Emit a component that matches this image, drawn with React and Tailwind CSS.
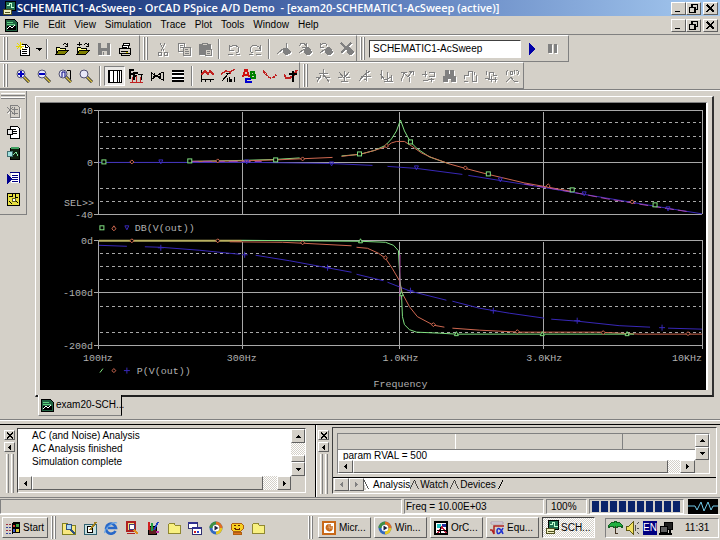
import React from "react";

const RAISED = "border border-t-white border-l-white border-b-[#606060] border-r-[#606060]";
const SUNKEN = "border border-t-[#808080] border-l-[#808080] border-b-white border-r-white";

function Glyph({ children, size = "h-[14px] w-[14px]", off = false }) {
  return (
    <svg
      viewBox="0 0 14 14"
      fill="none"
      stroke={off ? "#808080" : "#000"}
      shapeRendering="crispEdges"
      aria-hidden="true"
      className={`${size} shrink-0 ${off ? "[filter:drop-shadow(1px_1px_0_#fff)]" : ""}`}
    >
      {children}
    </svg>
  );
}

/* ---------- toolbar glyphs ---------- */
const lens = (inner) => (
  <g shapeRendering="auto">
    <path d="M8 8l5 5" stroke="#202020" strokeWidth="3" />
    <path d="M8 8l5 5" stroke="#d8c040" strokeWidth="1.500" />
    <circle cx="5" cy="5" r="4" fill="#e8e8f8" stroke="#505070" />
    {inner}
  </g>
);
const folderOpen = (
  <>
    <path d="M1 12V5h3l1 1h5v2" fill="#ffff90" />
    <path d="M1 12l3-4h10l-4 4z" fill="#808000" />
    <path d="M8 3c1-2 3-2 4 0M12 1v3h-2" />
  </>
);
const G = {
  fresh: (
    <>
      <path d="M4 2h6l3 3v8H4z" fill="#fff" />
      <path d="M6 7h5M6 9h5M6 11h5M9 2v3h3" />
      <path d="M4 0v8M0 4h8M1 1l6 6M7 1L1 7" stroke="#e8d800" />
    </>
  ),
  open: folderOpen,
  append: (
    <>
      {folderOpen}
      <path d="M1 2h5M3 0v4" />
    </>
  ),
  save: (
    <>
      <path d="M1 1h12v12H1z" fill="#808080" stroke="none" />
      <path d="M4 1h6v5H4zM5 9h5v4H5z" fill="#d4d0c8" stroke="none" />
      <path d="M6 10v3" />
    </>
  ),
  print: (
    <>
      <path d="M4 6l2-5h6l-2 5z" fill="#fff" />
      <path d="M1 6h11v5H1zM3 11v2h9l1-5-1-2" fill="#d4d0c8" />
      <path d="M6 3h4M5 5h4M3 9h7" />
      <path d="M8 10h2" stroke="#d0c000" />
    </>
  ),
  cut: <path d="M4 1l4 8M9 1L5 9M2 10h3v3H2zM8 10h3v3H8z" />,
  copy: (
    <>
      <path d="M1 1h6v8H1zM3 3h3M3 5h3" />
      <path d="M6 5h7v8H6z" fill="#d4d0c8" />
      <path d="M8 7h3M8 9h4M8 11h4" />
    </>
  ),
  paste: (
    <>
      <path d="M1 2h11v10H1z" fill="#808080" />
      <path d="M4 1h5v2H4z" fill="#d4d0c8" />
      <path d="M7 7h6v6H7z" fill="#d4d0c8" />
      <path d="M9 9h3M9 11h3" />
    </>
  ),
  undo: <path d="M2 3v5h5M2 7c1-4 9-5 10 0 0 2-1 4-3 4M1 12h5M9 12h4" />,
  redo: <path d="M12 3v5H7M12 7C11 3 3 2 2 7c0 2 1 4 3 4M1 12h4M8 12h5" />,
  pin: (
    <>
      <path d="M0 12L7 6" />
      <path d="M9 1v5l4 3v2l-4 2-3-3V8l3-2z" fill="#808080" />
    </>
  ),
  pinNext: (
    <>
      <path d="M1 4c2-4 6-3 7 0M8 1v4H4M1 11l5-4" />
      <path d="M10 5l3 4v2l-3 2-4-3V8z" fill="#808080" />
    </>
  ),
  pinPrev: (
    <>
      <path d="M8 4C7 0 2 1 1 4M1 1v4h4M1 11l5-4" />
      <path d="M10 5l3 4v2l-3 2-4-3V8z" fill="#808080" />
    </>
  ),
  pinOff: (
    <>
      <path d="M1 1l11 11M11 1L1 11" strokeWidth="2" />
      <path d="M9 5l4 4v2l-3 2-3-3V7z" fill="#808080" />
    </>
  ),
  run: <path d="M4 1v12l7-6z" fill="#0000a8" stroke="none" />,
  pause: <path d="M2 2h4v9H2zM8 2h3v9H8z" fill="#808080" stroke="none" />,
  zoomIn: lens(<path d="M5 2v6M2 5h6" stroke="#0000c0" strokeWidth="2" />),
  zoomOut: lens(<path d="M2 5h6" stroke="#0000c0" strokeWidth="2" />),
  zoomArea: lens(
    <>
      <path d="M4 3v5M4 3h3v5" stroke="#000080" />
      <path d="M9 1.500h3.500v9" stroke="#000" />
    </>
  ),
  zoomFit: lens(null),
  logX: (
    <>
      <path d="M0 1h14v12H0z" fill="#fff" />
      <path d="M1 1v12M5 1v12M9 1v12M11 1v12M13 1v12" />
    </>
  ),
  fft: (
    <>
      <path d="M1 10V1h4M1 5h3M5 11V4h4M5 7h3" strokeWidth="2" />
      <path d="M9 5h5M12 5v6" strokeWidth="1" />
      <path d="M1 13h13M3 13V8M7 13V7M11 13V8" stroke="#c02020" />
    </>
  ),
  perf: <path d="M1 3v9M13 3v9M1 4l5 3 7 4M1 11l5-4 7-4M4 4v5M10 4v5M3 7h8" />,
  logY: (
    <>
      <path d="M1 1h12v11H1z" fill="#fff" stroke="none" />
      <path d="M1 2h12M1 5h12M1 9h12M1 12h12" strokeWidth="1.5" />
    </>
  ),
  trace: (
    <>
      <path d="M1 1v12M1 10h13M5 10v3M10 10v3" />
      <path d="M1 6l4-4 3 3 2-3 4 4" stroke="#c02020" strokeWidth="1.5" />
    </>
  ),
  goal: (
    <>
      <path d="M0 5l5-3 4 1 5-3M9 2v3" stroke="#c02020" strokeWidth="1.5" />
      <path d="M1 12l7-8M5 4h4M6 9v4M8 8v5M9 10l2 3M11 10l-2 3M13 8v5" />
    </>
  ),
  label: (
    <>
      <path d="M1 8l2-7h2l2 7M2 6h4" stroke="#d01010" strokeWidth="2" />
      <path d="M9 3h3v3H9zM9 6h4v3H9z" stroke="#008000" strokeWidth="1.5" />
      <path d="M9 10H4v3h6" stroke="#0000d0" strokeWidth="2" />
    </>
  ),
  points: <path d="M0 2l3 3 2 3 3 1 3-1 2-2" stroke="#c02020" strokeWidth="1.5" strokeDasharray="3 1" />,
  cursor: (
    <>
      <path d="M0 5l2 4h4l3-2 4-6" stroke="#c02020" strokeWidth="2" />
      <path d="M5 5h8M9 2v11" strokeWidth="1.5" />
    </>
  ),
  c1: <path d="M7 0v8M3 4h9M1 13l4-7M13 13L8 6M0 8h5M10 8h4" />,
  c2: <path d="M7 2v11M2 3l5 6 5-6M1 8h4M9 8h4M4 12h7" />,
  c3: <path d="M1 12l5-6 6-4M8 1v11M3 7h10M6 10h3" />,
  c4: <path d="M2 1v9M1 5l5 6 6-3M8 3v9M12 6v6M5 12h9" />,
  c5: <path d="M1 12l3-8 4 4 4-6M1 3h6M9 2h4v4M9 8v5" />,
  c6: <path d="M1 5h5M4 2v6M8 3h5v4H8M2 11h5M10 9v4M7 10h6" />,
  c7: (
    <>
      <path d="M3 1h3v5H3zM8 1h3v5H8z" fill="#808080" />
      <path d="M1 7h4v5H1zM9 7h4v5H9zM6 5h2v4H6z" fill="#808080" />
    </>
  ),
  c8: <path d="M1 10V6h4V2h4v10h4V6M1 12h4M11 3v3" />,
  c9: <path d="M1 9h4V3h4v3h4M7 7v6M4 10h9M11 8v5M2 2v4" />,
  c10: <path d="M3 1L1 3v2l1 1M5 2h2v3H5zM9 1v4M11 1l2 1v3l-1 1M1 13l5-5 3 4h4" />,
};

/* ---------- application and desktop pictures ---------- */
const A = {
  pspice: (
    <>
      <path d="M3 0h10v9H3z" fill="#207050" />
      <path d="M5 4h2v-2h2v4h3" stroke="#c0ffd0" />
      <path d="M1 8h8v5H1z" fill="#f0f0c0" stroke="#505020" />
      <path d="M3 11h5" stroke="#505020" />
    </>
  ),
  sheet: (
    <>
      <path d="M1 1h9l3 3v9H1z" fill="#206040" />
      <path d="M3 8h9v4H3z" fill="#000" stroke="none" />
      <path d="M3 4h6M3 6h8" stroke="#60d080" />
      <path d="M3 11l3-3 2 2 3-3" stroke="#fff" />
    </>
  ),
  out: (
    <>
      <path d="M4 1h7l2 2v10H4z" fill="#fff" />
      <path d="M7 4h3M7 6h4M7 8h4" />
      <circle cx="4" cy="7" r="3" fill="#e8e8e8" />
    </>
  ),
  outOff: (
    <>
      <path d="M4 1h7l2 2v10H4z" fill="#d4d0c8" />
      <path d="M1 3l6 6M7 3L1 9M6 5h6M8 3v8M6 9h6" />
    </>
  ),
  cir: (
    <>
      <path d="M4 2h9v11H4z" fill="#102010" />
      <path d="M5 2h8" stroke="#40a060" strokeWidth="2" />
      <path d="M7 9l3-3 2 4" stroke="#80e0a0" />
      <circle cx="4" cy="8" r="3" fill="#a0e0e0" stroke="#407070" />
    </>
  ),
  queue: (
    <>
      <path d="M5 1h8v11H5z" fill="#fff" stroke="none" />
      <path d="M4 1h9v11M6 4h6M6 6h6M6 8h6M6 10h6" stroke="#000080" />
      <path d="M1 3v10l5-5z" fill="#000090" stroke="none" />
    </>
  ),
  model: (
    <>
      <path d="M1 1h12v12H1z" fill="#e8e040" />
      <path d="M3 4h3V1M9 2v3h3M3 9l3 3M10 9l2 2" />
      <circle cx="8" cy="8" r="2" fill="#fff" stroke="#606020" />
    </>
  ),
  flag: (
    <>
      <path d="M6 2c3-2 5 0 8-1v11c-3 1-5-1-8 1z" fill="#000" stroke="none" />
      <path d="M7 4h2v2H7z" fill="#e04030" stroke="none" />
      <path d="M10 3h3v3h-3z" fill="#40a040" stroke="none" />
      <path d="M7 8h2v3H7z" fill="#4060d0" stroke="none" />
      <path d="M10 8h3v3h-3z" fill="#e8d040" stroke="none" />
      <path d="M0 3h5M0 9h5" stroke="#a03040" strokeDasharray="2 1" />
      <path d="M0 6h5M0 12h5" stroke="#3040a0" strokeDasharray="2 1" />
    </>
  ),
  find: (
    <>
      <path d="M0 2h5l1 2h7v9H0z" fill="#f8e880" stroke="#808020" />
      <circle cx="7" cy="6" r="3" fill="#a8d8f8" stroke="#305080" />
      <path d="M9 9l4 4" stroke="#305080" strokeWidth="2" />
    </>
  ),
  desk: (
    <>
      <path d="M1 3h12v10H1z" fill="#c8e0e0" stroke="#306070" />
      <path d="M4 5h5v6H4z" fill="#fff" />
      <path d="M7 9l6-8" strokeWidth="2" stroke="#a08020" />
    </>
  ),
  ie: (
    <g shapeRendering="auto">
      <path d="M11.5 10A5 5 0 1 1 12 7H4" stroke="#2868c8" strokeWidth="2.6" />
      <path d="M1 12C0 9 8 0 13 2" stroke="#60a0e8" strokeWidth="1.2" />
    </g>
  ),
  pdf: (
    <>
      <path d="M2 1h8v9H2z" fill="#f0e080" stroke="#b02020" strokeWidth="2" />
      <circle cx="7" cy="6" r="3" fill="#fff" stroke="#404080" />
      <path d="M9 9l4 4" stroke="#e09020" strokeWidth="2" />
      <path d="M2 12h8" stroke="#b02020" />
    </>
  ),
  paint: (
    <>
      <path d="M2 5h8v8H2z" fill="#602020" />
      <path d="M3 1v8" stroke="#d02020" strokeWidth="2" />
      <path d="M6 2v8" stroke="#20a040" strokeWidth="2" />
      <path d="M12 1L8 9" stroke="#2040c0" strokeWidth="2" />
      <path d="M10 11h3" stroke="#c030a0" strokeWidth="2" />
    </>
  ),
  folder: (
    <path d="M1 12V4l2-2h4l1 2h5v8z" fill="#f8f080" stroke="#908830" />
  ),
  windows: (
    <>
      <path d="M0 1h9v6H0z" fill="#fff" stroke="#303070" />
      <path d="M0 2h9" stroke="#303090" strokeWidth="2" />
      <path d="M4 6h9v7H4z" fill="#fff" stroke="#303070" />
      <path d="M4 7h9" stroke="#303090" strokeWidth="2" />
      <path d="M6 11h2" stroke="#d02020" strokeWidth="2" />
      <path d="M9 11h2" stroke="#2040d0" strokeWidth="2" />
    </>
  ),
  media: (
    <g shapeRendering="auto">
      <circle cx="7" cy="7" r="5" stroke="#3068c0" strokeWidth="3" fill="#fff" />
      <path d="M7 2a5 5 0 0 1 5 5" stroke="#e07020" strokeWidth="3" />
      <path d="M12 7a5 5 0 0 1-5 5" stroke="#e8c820" strokeWidth="3" />
      <path d="M2 7a5 5 0 0 1 5-5" stroke="#409040" strokeWidth="3" />
      <path d="M5.500 4.500v5l4-2.500z" fill="#202040" stroke="none" />
    </g>
  ),
  smile: (
    <>
      <path d="M3 2h8l2 2v4l-2 2H3L1 8V4z" fill="#f8d020" stroke="#b06010" />
      <path d="M4 4h2M8 4h2M4 7h1v1h4V7h1" stroke="#602000" />
      <path d="M3 11h8v2H3z" fill="#e07020" stroke="#b06010" />
    </>
  ),
  ppt: (
    <g shapeRendering="auto">
      <path d="M1 1h12v12H1z" fill="#fff" stroke="#c86818" strokeWidth="2" />
      <path d="M6 4a3 3 0 1 0 4 4H6z" stroke="#c86818" strokeWidth="1.5" />
      <path d="M8 3v3h3" stroke="#c86818" strokeWidth="1.5" />
    </g>
  ),
  capture: (
    <>
      <path d="M1 1h12v12H1z" fill="#fff" strokeWidth="2" />
      <path d="M3 3h4v4H3z" fill="#20c0c0" stroke="none" />
      <path d="M8 3h4v3H8z" fill="#2030a0" stroke="none" />
      <path d="M4 12l4-6 4 6" stroke="#c02040" strokeWidth="1.5" />
      <path d="M6 6v6M3 9h9" />
    </>
  ),
  equation: (
    <g shapeRendering="auto">
      <path d="M1 1h12v2H1z" fill="#e8e8f0" stroke="#b0a0b0" />
      <path d="M0 9h2l2 4V5h10" stroke="#b02020" strokeWidth="1.5" />
      <path d="M13 7c-2 5-6 8-6 3 0-4 4-3 6 3" stroke="#2030d0" strokeWidth="1.5" />
    </g>
  ),
  umbrella: (
    <>
      <path d="M0 7c1-7 13-7 14 0l-3-1-4 1-4-1z" fill="#20b040" stroke="#106020" />
      <path d="M7 6v7h2" stroke="#403020" />
    </>
  ),
  speaker: (
    <>
      <path d="M1 5h3l4-4v12L4 9H1z" fill="#f0e060" stroke="#605810" />
      <path d="M10 4v6M12 3l2-2M12 7h2M12 11l2 2" stroke="#505050" />
    </>
  ),
  network: (
    <>
      <path d="M5 1h8v7H5z" fill="#202020" />
      <path d="M1 5h7v6H1z" fill="#606060" />
      <path d="M0 13h13M11 9v3" strokeWidth="1.5" />
    </>
  ),
};

function ToolButton({ name, glyph, off, pressed }) {
  return (
    <button
      aria-label={name}
      disabled={off}
      className={`flex h-[20px] w-[21px] shrink-0 items-center justify-center ${
        pressed ? "bg-[#ebe9e6] " + SUNKEN : ""
      }`}
    >
      <Glyph off={off}>{G[glyph]}</Glyph>
    </button>
  );
}

const Grip = () => (
  <span className="mr-[3px] ml-[3px] flex h-[23px] w-[6px] shrink-0 gap-px">
    <span className="w-[2px] border-r border-l border-r-[#808080] border-l-white" />
    <span className="w-[2px] border-r border-l border-r-[#808080] border-l-white" />
  </span>
);
const Sep = () => (
  <span className="mx-[3px] h-[20px] w-[2px] shrink-0 border-r border-l border-r-white border-l-[#808080]" />
);
const Bar = ({ children, width }) => (
  <div
    role="toolbar"
    className={`flex h-[27px] shrink-0 items-center border-t border-r border-b border-t-white border-r-[#808080] border-b-[#808080] ${width}`}
  >
    {children}
  </div>
);

function WindowButtons() {
  const b = `flex h-[13px] w-[15px] items-center justify-center bg-[#d4d0c8] ${RAISED}`;
  return (
    <div className="ml-auto flex pr-[2px]">
      <button aria-label="Minimize" className={b}>
        <Glyph size="h-[11px] w-[11px]"><path d="M3 11h6" strokeWidth="2" /></Glyph>
      </button>
      <button aria-label="Restore" className={b}>
        <Glyph size="h-[11px] w-[11px]">
          <path d="M5 5V2h7v6h-2M2 6h7v6H2z" strokeWidth="1.500" />
        </Glyph>
      </button>
      <button aria-label="Close" className={`ml-[2px] ${b}`}>
        <Glyph size="h-[11px] w-[11px]"><path d="M2 2l9 9M11 2l-9 9" strokeWidth="2" /></Glyph>
      </button>
    </div>
  );
}

const ARROWS = { up: "M3 9h8L7 5z", down: "M3 5h8L7 9z", left: "M9 3v8L5 7z", right: "M5 3v8l4-4z" };
function Arrow({ dir, className = "h-[13px] w-[14px]", off }) {
  return (
    <button aria-label={`Scroll ${dir}`} className={`flex shrink-0 items-center justify-center bg-[#d4d0c8] ${RAISED} ${className}`}>
      <Glyph size="h-[11px] w-[11px]">
        <path d={ARROWS[dir]} fill={off ? "#808080" : "#000"} stroke="none" />
      </Glyph>
    </button>
  );
}

function DockHandle() {
  const b = `flex h-[10px] w-[11px] items-center justify-center ${RAISED}`;
  return (
    <div className="flex w-[11px] shrink-0 flex-col gap-[2px] pt-[3px]">
      <button aria-label="Close pane" className={b}>
        <Glyph size="h-[7px] w-[8px]"><path d="M1 2l12 10M13 2L1 12" strokeWidth="3" /></Glyph>
      </button>
      <button aria-label="Collapse pane" className={b}>
        <Glyph size="h-[9px] w-[9px]"><path d="M10 2v10L4 7z" fill="#000" stroke="none" /></Glyph>
      </button>
      <span className="flex flex-1 justify-center gap-[2px]">
        <span className="w-[3px] border-r border-l border-r-[#808080] border-l-white" />
        <span className="w-[3px] border-r border-l border-r-[#808080] border-l-white" />
      </span>
    </div>
  );
}

/* ---------- Bode plot ---------- */
const GREEN = "#80e080";
const RED = "#d06850";
const BLUE = "#3828b8";
const Sq = ({ x, y }) => <rect x={x - 2} y={y - 2} width="4" height="4" fill="#000" stroke={GREEN} />;
const Di = ({ x, y }) => <path d={`M${x} ${y - 2}l2 2-2 2-2-2z`} fill="#000" stroke={RED} />;
const Dn = ({ x, y }) => <path d={`M${x - 2} ${y - 2}h4l-2 4z`} fill="none" stroke={BLUE} />;
const Up = ({ x, y }) => <path d={`M${x - 2} ${y + 2}h4l-2-4z`} fill="#000" stroke={GREEN} />;
const Pl = ({ x, y }) => <path d={`M${x - 3} ${y}h6M${x} ${y - 3}v6`} stroke={BLUE} />;

function Plot() {
  return (
    <svg viewBox="40 103 667 287" className="block h-auto w-full" fill="none" role="img" aria-label="Bode plot">
      <g stroke="#a8a8a8" shapeRendering="crispEdges">
        <path d="M94 110.500H703M94 162.500H703M94 214.500H703" />
        <path d="M94 240.500H703M94 292.500H703M94 345.500H703" />
        <path d="M98.500 110V214M242.500 112V214M400.500 112V214M544.500 112V214M703.500 110V214" />
        <path d="M98.500 240V349M242.500 242V349M400.500 242V349M544.500 242V349M703.500 240V349" />
        <path
          strokeDasharray="3 3"
          d="M100 122.500H702M100 136.500H702M100 148.500H702M100 188.500H702M100 201.500H702M100 253.500H702M100 266.500H702M100 279.500H702M100 306.500H702M100 332.500H702"
        />
      </g>

      <path stroke={BLUE} d="M99 162.500H250L330 163.500L373 165.500M388 166.500L417 168.500L463 174.500M469 175.500L500 180.500L544 187.500L585 194.500L669 208.500L703 214" />
      <path stroke={GREEN} d="M190 161.500L242 160.500L276 159.500L300 158M342 156L360 154.500L375 150.500L386 145.500L392 139L397 131L401 120L405 131L411 142L418 149L430 157L450 164" />
      <path stroke={RED} d="M190 161.500L240 161L276 160L333 157.500M342 156.500L362 154L375 150.500L387 146.500L392 143L397 141.500L405 141.500L412 146L422 153L432 157.500L450 164L466 168.500L489 174.500L525 183L550 187.500L572 191.500" />
      <path stroke="#a848b0" strokeDasharray="9 4" d="M190 161.500H262M525 184L572 192L608 199L657 207L690 212" />
      <Sq x={104} y={162} /><Sq x={190} y={161} /><Sq x={276} y={160} /><Sq x={360} y={154} />
      <Sq x={411} y={142} /><Sq x={489} y={174} /><Sq x={573} y={190} /><Sq x={656} y={205} />
      <Di x={132} y={162} /><Di x={218} y={161} /><Di x={303} y={159} /><Di x={387} y={146} />
      <Di x={466} y={168} /><Di x={549} y={186} /><Di x={633} y={202} />
      <Dn x={161} y={162} /><Dn x={247} y={162} /><Dn x={332} y={164} /><Dn x={417} y={168} />
      <Dn x={501} y={180} /><Dn x={585} y={194} /><Dn x={669} y={209} />

      <path stroke="#b8b060" strokeWidth="2" d="M99 241H242" />
      <path stroke={BLUE} d="M99 245.500L127 246.500M145 247L161 247.500L200 250.500L240 254.500M256 255.500L290 261L352 272.500M357 274.500L384 281M388 282.500L411 291.500L447 300.500M453 301.500L480 308.500L510 313.500L545 318.500M552 319.500L578 321.500L620 326L651 327.500M669 328.500L703 329.500" />
      <path stroke={RED} d="M230 242L283 242.500L304 243.500L352 246M357 247.500L368 248.500L379 253.500L386 258.500L393 269L400 281L403 294L410 307L418 317L434 325.500L445 327.500M453 328.500L480 330.500L520 332.500H600L640 334.500H703" />
      <path stroke={GREEN} d="M242 240.500L361 241.500L386 242.500L394 245.500L399 251L400.500 280L402 294L403 317L405 325L410 330L417 332.500L440 333.500L457 334.500H635" />
      <path stroke="#a840a0" d="M400.500 255V300" />
      <Di x={132} y={241} /><Di x={218} y={241} /><Di x={303} y={243} /><Di x={386} y={258} />
      <Di x={434} y={325} /><Di x={518} y={332} /><Di x={604} y={333} /><Di x={689} y={334} />
      <Up x={361} y={241} /><Up x={402} y={294} /><Up x={457} y={334} /><Up x={543} y={334} /><Up x={628} y={334} />
      <Pl x={161} y={248} /><Pl x={245} y={255} /><Pl x={328} y={268} /><Pl x={411} y={291} />
      <Pl x={494} y={311} /><Pl x={578} y={321} /><Pl x={663} y={328} />

      <Sq x={102} y={228} /><path d="M112 229l2-3 2 3-2 2z" stroke={RED} /><Dn x={127} y={228} />
      <path d="M100 373l3-4" stroke={GREEN} /><Di x={114} y={371} /><Pl x={127} y={371} />

      <g fill="#b0b0b0" className="font-['Liberation_Mono',monospace] text-[10px]">
        <text x="93" y="114" textAnchor="end">40</text>
        <text x="93" y="166" textAnchor="end">0</text>
        <text x="64" y="206">{"SEL>>"}</text>
        <text x="93" y="218" textAnchor="end">-40</text>
        <text x="135" y="231">DB(V(out))</text>
        <text x="93" y="244" textAnchor="end">0d</text>
        <text x="93" y="296" textAnchor="end">-100d</text>
        <text x="93" y="349" textAnchor="end">-200d</text>
        <text x="98" y="361" textAnchor="middle">100Hz</text>
        <text x="242" y="361" textAnchor="middle">300Hz</text>
        <text x="401" y="361" textAnchor="middle">1.0KHz</text>
        <text x="545" y="361" textAnchor="middle">3.0KHz</text>
        <text x="703" y="361" textAnchor="end">10KHz</text>
        <text x="137" y="374">P(V(out))</text>
        <text x="401" y="387" textAnchor="middle">Frequency</text>
      </g>
    </svg>
  );
}

const MENUS = ["File", "Edit", "View", "Simulation", "Trace", "Plot", "Tools", "Window", "Help"];
const VIEWS = [
  ["zoomIn", "Zoom in"], ["zoomOut", "Zoom out"], ["zoomArea", "Zoom area"], ["zoomFit", "Zoom fit"],
];
const CURSORS = ["c1", "c2", "c3", "c4", "c5", "c6", "c7", "c8", "c9", "c10"];
const QUICK = ["find", "desk", "ie", "pdf", "paint", "folder", "windows", "media", "smile", "folder"];
const TASKS = [["ppt", "Micr..."], ["media", "Win..."], ["capture", "OrC..."], ["equation", "Equ..."]];
const DITHER = "bg-[repeating-conic-gradient(#fff_0%_25%,#d4d0c8_0%_50%)] bg-[length:2px_2px]";

export default function App() {
  return (
    <div className="flex min-h-screen flex-col bg-[#d4d0c8] font-['Liberation_Sans',Arial,sans-serif] text-[10px] leading-[12px] text-black">
      <header className="flex h-[16px] items-center bg-linear-to-r from-[#0a246a] via-[#5878b8] to-[#a6caf0] pl-[2px] text-white">
        <Glyph>{A.pspice}</Glyph>
        <h1 className="ml-px font-['Open_Sans',sans-serif] text-[11px] font-semibold whitespace-pre">
          SCHEMATIC1-AcSweep - OrCAD PSpice A/D Demo  - [exam20-SCHEMATIC1-AcSweep (active)]
        </h1>
        <WindowButtons />
      </header>

      <nav className="flex h-[19px] items-center border-b border-[#808080] pl-[4px]">
        <Glyph>{A.sheet}</Glyph>
        <div className="ml-[4px] flex gap-[7px]">
          {MENUS.map((m) => (
            <button key={m} className="px-px">{m}</button>
          ))}
        </div>
        <WindowButtons />
      </nav>

      <div className="flex">
        <Bar width="w-[140px]">
          <Grip />
          <ToolButton name="New" glyph="fresh" />
          <button aria-label="New options" className="flex w-[10px] shrink-0 justify-center">
            <Glyph size="h-[11px] w-[11px]"><path d="M3 6h9l-4 4z" fill="#000" stroke="none" /></Glyph>
          </button>
          <Sep />
          <ToolButton name="Open" glyph="open" />
          <ToolButton name="Append" glyph="append" />
          <ToolButton name="Save" glyph="save" off />
          <ToolButton name="Print" glyph="print" />
        </Bar>
        <Bar width="w-[217px]">
          <Grip />
          <ToolButton name="Cut" glyph="cut" off />
          <ToolButton name="Copy" glyph="copy" off />
          <ToolButton name="Paste" glyph="paste" off />
          <Sep />
          <ToolButton name="Undo" glyph="undo" off />
          <ToolButton name="Redo" glyph="redo" off />
          <Sep />
          <ToolButton name="Toggle bookmark" glyph="pin" off />
          <ToolButton name="Next bookmark" glyph="pinNext" off />
          <ToolButton name="Previous bookmark" glyph="pinPrev" off />
          <ToolButton name="Clear bookmarks" glyph="pinOff" off />
        </Bar>
        <Bar width="w-[212px]">
          <Grip />
          <input
            aria-label="Simulation profile"
            defaultValue="SCHEMATIC1-AcSweep"
            className="h-[18px] w-[152px] border border-t-[#404040] border-r-white border-b-white border-l-[#404040] bg-white px-[3px]"
          />
          <ToolButton name="Run" glyph="run" />
          <ToolButton name="Pause" glyph="pause" off />
        </Bar>
      </div>
      <div className="flex border-b border-[#808080]">
        <Bar width="w-[300px]">
          <Grip />
          {VIEWS.map(([g, n]) => <ToolButton key={g} name={n} glyph={g} />)}
          <Sep />
          <ToolButton name="Log X axis" glyph="logX" pressed />
          <ToolButton name="Fourier" glyph="fft" />
          <ToolButton name="Performance analysis" glyph="perf" />
          <ToolButton name="Log Y axis" glyph="logY" />
          <Sep />
          <ToolButton name="Add trace" glyph="trace" />
          <ToolButton name="Evaluate goal function" glyph="goal" />
          <ToolButton name="Text label" glyph="label" />
          <ToolButton name="Mark data points" glyph="points" />
          <ToolButton name="Toggle cursor" glyph="cursor" />
        </Bar>
        <Bar width="w-[224px]">
          <Grip />
          {CURSORS.map((g) => <ToolButton key={g} name={`Cursor ${g}`} glyph={g} off />)}
        </Bar>
      </div>

      <main className="flex flex-1 border-t border-white">
        <aside className="flex h-[124px] w-[27px] shrink-0 flex-col items-center gap-[7px] border-r border-b border-[#808080] pt-[2px]">
          <span className="-mb-[2px] flex h-[6px] w-[24px] shrink-0 flex-col gap-px">
            <span className="h-[3px] border-t border-b border-t-white border-b-[#808080]" />
            <span className="h-[3px] border-t border-b border-t-white border-b-[#808080]" />
          </span>
          <button aria-label="Output window" disabled><Glyph off>{A.outOff}</Glyph></button>
          <button aria-label="View output file"><Glyph>{A.out}</Glyph></button>
          <button aria-label="View circuit file"><Glyph>{A.cir}</Glyph></button>
          <button aria-label="Simulation queue" className="mt-[4px]"><Glyph>{A.queue}</Glyph></button>
          <button aria-label="Model editor"><Glyph>{A.model}</Glyph></button>
        </aside>
        <section className="min-w-0 flex-1 pt-[5px] pr-[6px] pl-[8px]">
          <div className="border-t border-r-2 border-b-2 border-l border-t-white border-r-[#303030] border-b-[#202020] border-l-white pt-[5px] pr-[4px] pb-[5px] pl-[4px]">
            <div className="border-t border-r-2 border-t-[#808080] border-r-white bg-black">
              <Plot />
            </div>
          </div>
          <button className="-mt-[2px] ml-[3px] flex h-[21px] w-[84px] items-center gap-[2px] border-r border-b border-l border-r-black border-b-[#808080] border-l-white bg-[#d4d0c8] pl-px whitespace-nowrap">
            <Glyph>{A.sheet}</Glyph>
            <span>exam20-SCH...</span>
          </button>
        </section>
      </main>

      <div className="mt-px flex h-[6px] flex-col border-t border-b border-t-[#808080] border-b-black">
        <span className="h-px bg-white" />
      </div>

      <div className="flex h-[72px]">
        <section className="flex w-[316px] shrink-0 gap-[2px] border-r border-r-black pt-[2px] pr-[8px] pb-[4px] pl-[4px]">
          <DockHandle />
          <div className="mt-px mr-px flex min-w-0 flex-1 flex-col border border-t-[#404040] border-r-white border-b-white border-l-[#404040]">
            <div className="flex h-[47px]">
              <div className="flex-1 bg-white pl-[14px] leading-[13px]">
                <p>AC (and Noise) Analysis</p>
                <p>AC Analysis finished</p>
                <p>Simulation complete</p>
              </div>
              <div className={`flex w-[14px] flex-col ${DITHER}`}>
                <Arrow dir="up" className="h-[14px] w-[14px]" />
                <span className={`mt-auto h-[7px] bg-[#d4d0c8] ${RAISED}`} />
                <Arrow dir="down" className="h-[14px] w-[14px]" />
              </div>
            </div>
            <div className="flex h-[14px] pr-[14px]">
              <div className={`flex flex-1 ${DITHER}`}>
                <Arrow dir="left" className="h-[14px] w-[14px]" />
                <span className={`mr-[14px] flex-1 bg-[#d4d0c8] ${RAISED}`} />
                <Arrow dir="right" className="h-[14px] w-[14px]" />
              </div>
            </div>
          </div>
        </section>

        <section className="flex min-w-0 flex-1 gap-[3px] border-l border-l-white pt-[2px] pr-[3px] pb-[3px] pl-px">
          <DockHandle />
          <div className="flex min-w-0 flex-1 flex-col border border-t-[#404040] border-r-white border-b-white border-l-[#404040]">
            <div className="mt-[5px] mr-[6px] ml-[4px] flex border border-t-[#808080] border-r-white border-b-white border-l-[#808080]">
              <div className="min-w-0 flex-1">
                <div className="h-[26px] overflow-hidden bg-white">
                  <table className="w-full table-fixed border-collapse bg-white">
                    <thead>
                      <tr className="h-[15px] bg-[#d4d0c8]">
                        <th aria-label="Parameter" className="w-[117px] border-r border-b border-r-white border-b-[#808080]" />
                        <th aria-label="Value" className="w-[167px] border-r border-b border-r-[#808080] border-b-[#808080]" />
                        <th aria-label="Status" className="border-b border-b-[#808080]" />
                      </tr>
                    </thead>
                    <tbody>
                      <tr>
                        <td colSpan="3" className="pl-[5px]">param RVAL = 500</td>
                      </tr>
                    </tbody>
                  </table>
                </div>
                <div className={`flex ${DITHER}`}>
                  <Arrow dir="left" className="h-[13px] w-[15px]" />
                  <span className={`mr-[12px] flex-1 bg-[#d4d0c8] ${RAISED}`} />
                  <Arrow dir="right" className="h-[13px] w-[15px]" />
                </div>
              </div>
              <div className="flex w-[14px] flex-col">
                <Arrow dir="up" />
                <Arrow dir="down" />
              </div>
            </div>
            <div className="mt-[3px] flex border-t border-black pl-px">
              <Arrow dir="left" className="h-[13px] w-[15px]" off />
              <Arrow dir="right" className="h-[13px] w-[15px]" off />
              <button className="flex h-[13px] items-center bg-white">
                <Glyph size="h-[13px] w-[9px]"><path d="M-3 -1h-2v17h9z" fill="#d4d0c8" stroke="none" /><path d="M0 0l7 14" /></Glyph>
                Analysis
              </button>
              <button className="flex h-[13px] items-center gap-px pr-[2px]">
                <Glyph size="h-[13px] w-[9px]"><path d="M0 14L7 0l6 14" /></Glyph>
                Watch
              </button>
              <button className="flex h-[13px] items-center gap-px">
                <Glyph size="h-[13px] w-[9px]"><path d="M0 14L7 0l6 14" /></Glyph>
                Devices
                <Glyph size="h-[13px] w-[9px]"><path d="M2 14L9 0" strokeWidth="1.500" /></Glyph>
              </button>
            </div>
          </div>
        </section>
      </div>

      <footer className="flex h-[17px] gap-[2px] border-t border-[#808080] pt-px pr-[2px]">
        <span className={`flex-1 ${SUNKEN}`} />
        <span className={`w-[140px] pl-px leading-[14px] ${SUNKEN}`}>Freq = 10.00E+03</span>
        <span className={`w-[41px] pl-[4px] leading-[14px] ${SUNKEN}`}>100%</span>
        <span className={`flex w-[95px] gap-[2px] p-px pl-[2px] ${SUNKEN}`}>
          {Array.from({ length: 10 }, (_, i) => (
            <span key={i} className="w-[7px] bg-[#0a246a]" />
          ))}
        </span>
        <span className="ml-[2px] w-[30px] bg-black">
          <svg viewBox="0 0 30 15" className="h-[15px] w-[30px]" fill="none" stroke="#70c8e8">
            <path d="M0 7h7l2 4 4-8 3 9 4-9 3 8 2-4h5" />
          </svg>
        </span>
      </footer>

      <div className="flex h-[26px] items-center border-t border-white pr-px pl-[2px]">
        <button className={`flex h-[21px] w-[46px] items-center gap-[2px] pl-[2px] ${RAISED}`}>
          <Glyph size="h-[14px] w-[16px]">{A.flag}</Glyph>
          Start
        </button>
        <Grip />
        <div className="ml-[2px] flex gap-[7px]">
          {QUICK.map((q, i) => (
            <button key={i} aria-label={`Launch ${q}`}><Glyph>{A[q]}</Glyph></button>
          ))}
        </div>
        <div className="ml-auto flex h-full items-center">
          <Grip />
          <div className="flex gap-[3px] pl-px">
            {TASKS.map(([g, t]) => (
              <button key={t} className={`flex h-[21px] w-[53px] items-center gap-[3px] pl-[3px] ${RAISED}`}>
                <Glyph>{A[g]}</Glyph>
                {t}
              </button>
            ))}
            <button className={`flex h-[21px] w-[53px] items-center gap-px border border-t-[#404040] border-r-white border-b-white border-l-[#404040] pl-[2px] ${DITHER}`}>
              <Glyph size="h-[15px] w-[15px]">{A.pspice}</Glyph>
              SCH...
            </button>
          </div>
          <div className={`ml-[10px] flex h-[20px] w-[114px] items-center gap-[2px] pl-[2px] ${SUNKEN}`}>
            <Glyph size="h-[15px] w-[15px]">{A.umbrella}</Glyph>
            <Glyph>{A.speaker}</Glyph>
            <span className="ml-[2px] h-[14px] w-[14px] bg-[#000080] text-center leading-[14px] text-white">EN</span>
            <Glyph>{A.network}</Glyph>
            <time className="ml-[10px]">11:31</time>
          </div>
        </div>
      </div>
    </div>
  );
}
